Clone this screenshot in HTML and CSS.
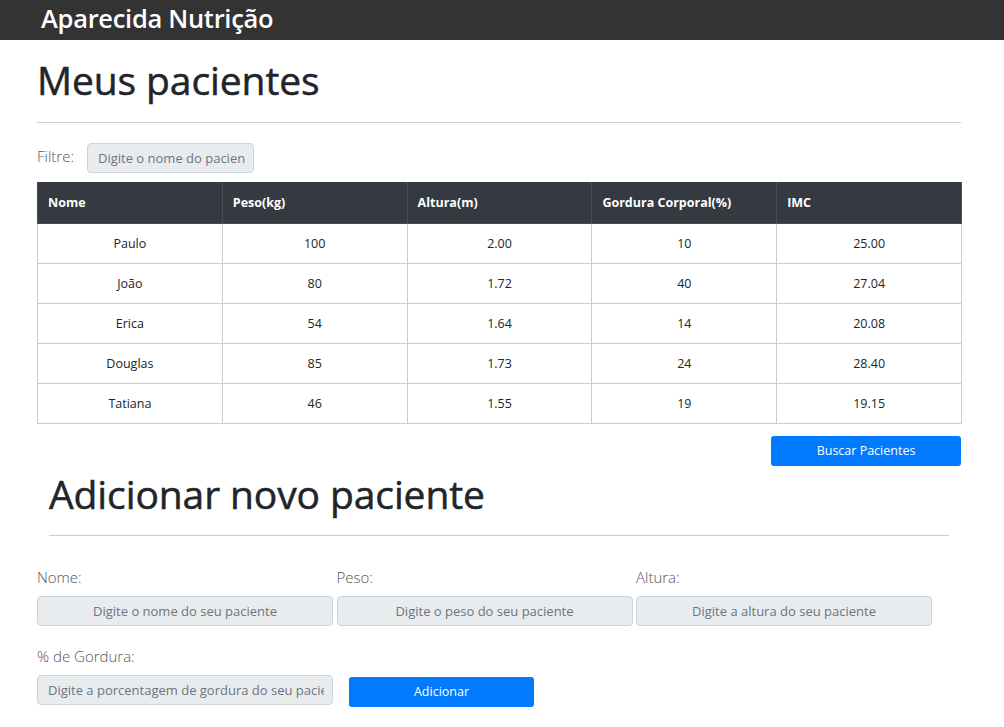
FILE: index.html
```html
<!DOCTYPE html>
<html lang="pt-BR">
<head>
<meta charset="utf-8">
<title>Aparecida Nutrição</title>
<link rel="stylesheet" href="styles.css">
</head>
<body>
<header class="topbar">
  <div class="topbar-inner"><span class="brand">Aparecida Nutrição</span></div>
</header>
<main class="container">
  <section class="patients">
    <h1 class="title">Meus pacientes</h1>
    <hr class="rule">
    <div class="filter">
      <label class="filter-label" for="filtro">Filtre:</label>
      <input id="filtro" class="field field-filter" type="text" placeholder="Digite o nome do paciente">
    </div>
    <table class="table">
      <thead>
        <tr><th>Nome</th><th>Peso(kg)</th><th>Altura(m)</th><th>Gordura Corporal(%)</th><th>IMC</th></tr>
      </thead>
      <tbody>
        <tr><td>Paulo</td><td>100</td><td>2.00</td><td>10</td><td>25.00</td></tr>
        <tr><td>João</td><td>80</td><td>1.72</td><td>40</td><td>27.04</td></tr>
        <tr><td>Erica</td><td>54</td><td>1.64</td><td>14</td><td>20.08</td></tr>
        <tr><td>Douglas</td><td>85</td><td>1.73</td><td>24</td><td>28.40</td></tr>
        <tr><td>Tatiana</td><td>46</td><td>1.55</td><td>19</td><td>19.15</td></tr>
      </tbody>
    </table>
    <div class="actions">
      <button class="btn btn-search" type="button">Buscar Pacientes</button>
    </div>
  </section>
  <section class="add">
    <div class="add-head">
      <h2 class="title">Adicionar novo paciente</h2>
      <hr class="rule">
    </div>
    <form class="form">
      <div class="grid">
        <div class="group">
          <label class="label" for="nome">Nome:</label>
          <input id="nome" class="field" type="text" placeholder="Digite o nome do seu paciente">
        </div>
        <div class="group">
          <label class="label" for="peso">Peso:</label>
          <input id="peso" class="field" type="text" placeholder="Digite o peso do seu paciente">
        </div>
        <div class="group">
          <label class="label" for="altura">Altura:</label>
          <input id="altura" class="field" type="text" placeholder="Digite a altura do seu paciente">
        </div>
        <div class="group">
          <label class="label" for="gordura">% de Gordura:</label>
          <div class="row-last">
            <input id="gordura" class="field" type="text" placeholder="Digite a porcentagem de gordura do seu paciente">
            <button class="btn btn-add" type="button">Adicionar</button>
          </div>
        </div>
      </div>
    </form>
  </section>
</main>
</body>
</html>
```
FILE: styles.css
```css
* { box-sizing: border-box; }
html, body { margin: 0; padding: 0; }
body {
  font-family: "Open Sans", "Noto Sans", "Liberation Sans", sans-serif;
  color: #212529;
  background: #fff;
  font-size: 13px;
}
.topbar {
  background: #333;
  height: 40px;
}
.topbar-inner {
  padding-left: 41px;
  height: 40px;
  display: flex;
  align-items: center;
}
.brand {
  color: #fff;
  font-size: 25.5px;
  font-weight: 600;
  line-height: 1;
  letter-spacing: -0.3px;
  margin-top: -2px;
}
.container {
  width: 924px;
  margin-left: 37px;
}
.title {
  margin: 0;
  font-weight: 500;
  font-size: 39px;
  line-height: 46px;
  letter-spacing: -0.1px;
  -webkit-text-stroke: 0.5px currentColor;
}
.patients .title { padding-top: 17px; }
.rule {
  border: 0;
  border-top: 1px solid #ccc;
  margin: 0;
}
.patients .rule { margin-top: 19px; }
.filter {
  display: flex;
  align-items: center;
  margin-top: 20px;
  height: 30px;
}
.filter-label {
  font-size: 15px;
  font-weight: 300;
  color: #555;
  width: 50px;
  margin-top: -4px;
}
.field {
  height: 30px;
  background: #e9ecef;
  border: 1px solid #ced4da;
  border-radius: 4px;
  font-family: inherit;
  font-size: 13px;
  color: #495057;
  text-align: center;
  padding: 0 8px;
}
.field::placeholder { color: #6c757d; }
.field-filter {
  width: 167px;
  text-align: left;
  padding-left: 10px;
}
.table {
  width: 925px;
  margin-top: 9px;
  border-collapse: collapse;
  table-layout: fixed;
}
.table th {
  background: #343a40;
  color: #fff;
  font-weight: 700;
  font-size: 12.5px;
  text-align: left;
  height: 41px;
  padding: 0 10px;
  border: 1px solid #454d55;
  border-top: 0;
}
.table td {
  height: 40px;
  text-align: center;
  border: 1px solid #ccc;
  font-size: 12.5px;
  padding: 0;
}
.actions {
  display: flex;
  justify-content: flex-end;
  margin-top: 12px;
}
.btn {
  background: #007bff;
  color: #fff;
  border: 0;
  border-radius: 3px;
  font-family: inherit;
  font-size: 12.5px;
  height: 30px;
  cursor: pointer;
}
.btn-search { width: 190px; }
.add-head {
  padding: 0 12px;
  margin-top: 5px;
}
.add-head .rule { margin-top: 18px; }
.form { margin-top: 32px; }
.grid {
  display: grid;
  grid-template-columns: 296px 296px 296px;
  column-gap: 3.5px;
  row-gap: 21px;
}
.group {
  display: flex;
  flex-direction: column;
}
.label {
  font-size: 15px;
  font-weight: 300;
  color: #555;
  height: 28px;
  line-height: 18px;
}
.row-last {
  display: flex;
  align-items: flex-start;
  gap: 16px;
}
.row-last .field {
  width: 296px;
  flex: none;
  text-align: left;
  padding-left: 10px;
}
.btn-add {
  width: 185px;
  flex: none;
  margin-top: 2px;
}
```
